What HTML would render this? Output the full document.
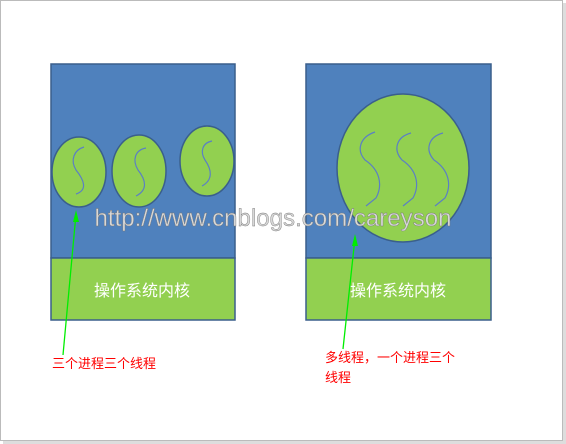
<!DOCTYPE html>
<html><head><meta charset="utf-8"><style>
html,body{margin:0;padding:0;background:#fff;width:566px;height:444px;overflow:hidden}
</style></head><body>
<svg width="566" height="444" xmlns="http://www.w3.org/2000/svg" style="position:absolute;left:0;top:0">
<rect x="0.5" y="0.5" width="562" height="440" fill="#fff" stroke="#bbb"/>
<rect x="563" y="3" width="3" height="441" fill="#ddd"/>
<rect x="3" y="441" width="563" height="3" fill="#ddd"/>
<g stroke="#3a5f8c" stroke-width="1.5">
<rect x="51" y="64" width="184" height="194" fill="#4f81bd"/>
<rect x="51" y="258" width="184" height="62" fill="#92d050"/>
<rect x="306" y="64" width="185" height="194" fill="#4f81bd"/>
<rect x="306" y="258" width="185" height="62" fill="#92d050"/>
<ellipse cx="79" cy="172" rx="27" ry="35" fill="#92d050"/>
<ellipse cx="139" cy="171" rx="27" ry="36" fill="#92d050"/>
<ellipse cx="207" cy="161" rx="27" ry="35" fill="#92d050"/>
<ellipse cx="403" cy="168" rx="66" ry="74" fill="#92d050"/>
</g>
<g fill="none" stroke="#5b7fc4" stroke-width="1.2">
<path d="M84 147 C74 150 70 160 76 170 C84 180 88 190 76 194"/>
<path d="M146 148 C135 150 132 160 138 170 C146 180 148 190 136 196"/>
<path d="M212 141 C202 143 200 152 205 160 C212 170 213 180 202 186"/>
<path d="M375 132 C360 137 356 150 365 160 C380 170 383 185 376 198 L366 206"/>
<path d="M411 133 C396 137 393 150 402 160 C417 170 420 185 413 198 L403 206"/>
<path d="M443 133 C428 137 425 150 434 160 C449 170 452 185 445 198 L435 206"/>
</g>
<g stroke="#00ee00" stroke-width="1.3">
<line x1="63" y1="355" x2="76" y2="214"/>
<line x1="343" y1="349" x2="355" y2="238"/>
</g>
<polygon points="76,210 73,222 79,222" fill="#00ee00"/>
<polygon points="355,234 352,246 358,246" fill="#00ee00"/>
<text x="273" y="226" text-anchor="middle" font-family="Liberation Sans, sans-serif" font-size="24" textLength="357" lengthAdjust="spacingAndGlyphs" fill="#d8d8d8" stroke="#777" stroke-width="0.4">http://www.cnblogs.com/careyson</text>
<g font-family="Liberation Sans, Noto Sans CJK SC, sans-serif" fill="#fff" font-size="16">
<text x="142" y="296" text-anchor="middle">操作系统内核</text>
<text x="398" y="296" text-anchor="middle">操作系统内核</text>
</g>
<g font-family="Liberation Sans, Noto Sans CJK SC, sans-serif" fill="#ff0000" font-size="13">
<text x="52" y="368">三个进程三个线程</text>
<text x="325" y="362">多线程，一个进程三个</text>
<text x="325" y="382">线程</text>
</g>
</svg>
</body></html>
